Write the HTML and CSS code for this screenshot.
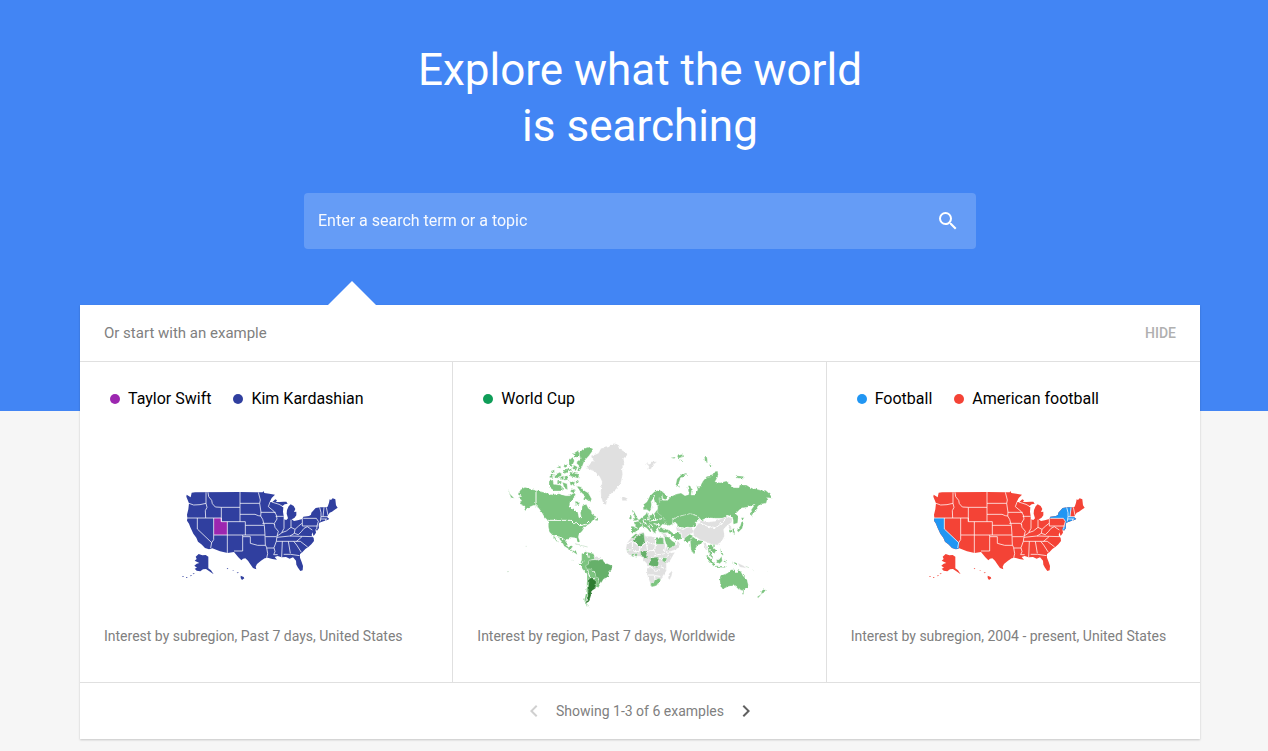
FILE: index.html
```html
<!DOCTYPE html>
<html lang="en">
  <head>
    <meta charset="utf-8">
    <meta name="viewport" content="width=device-width, initial-scale=1">
    <title>Explore what the world is searching</title>
    <link rel="stylesheet" href="styles.css">
  </head>

  <body>
    <!-- shared map shapes -->
    <svg class="defs" aria-hidden="true">
      <defs>
        <path id="us-land" d="M50 38 60 37 195 36 252 37 263 37 265 33 268 39 283 41 300 44 290 54 284 66 292 66 301 58 306 61 303 66 314 66 326 65 334 65 338 71 329 73 320 80 325 82 324 95 326 108 326 118 334 120 339 115 335 101 336 90 341 79 347 73 356 78 361 87 357 96 364 95 364 106 358 114 350 118 357 123 368 121 382 117 385 110 402 108 408 104 409 98 422 84 436 82 452 82 458 80 462 68 464 58 468 60 473 55 481 58 483 76 488 83 478 90 471 95 464 98 458 107 457 112 463 117 455 121 445 124 433 128 431 134 432 144 426 152 421 147 423 158 416 168 412 157 410 166 416 174 417 183 409 193 400 201 391 207 382 217 375 222 375 233 380 246 384 258 383 271 376 273 369 263 364 254 363 242 354 232 344 236 333 231 320 232 308 228 299 231 306 239 292 237 278 233 269 235 258 242 246 252 242 260 244 268 234 264 226 253 219 242 211 235 204 236 199 241 190 232 177 216 158 219 135 214 112 205 102 208 90 204 79 193 69 185 64 173 55 161 46 142 42 131 36 122 37 114 36 104 40 88 42 70 34 50 35 44 47 52Z
          M62 230 71 222 82 226 92 225 100 230 100 265 108 271 116 283 103 274 93 267 84 268 76 274 65 272 59 266 66 263 58 257 65 251 73 249 59 242 65 237Z
          M197 287 206 291 208 295 201 300 197 294ZM185 276 192 278 188 280ZM172 270 176 271 175 273ZM155 264 160 265 158 268Z
          M22 288h4v2h-4ZM33 291h4v2h-4ZM45 287l5-2v2l-4 2ZM53 281l5-2v2l-4 2Z"/>
        <path id="us-borders" d="M42 70 56 75 75 74 93 70M93 37V70L96 82 91 92 92 114M99 37 101 50 110 61 112 71 121 81 139 82M139 82V125M195 36V125M139 82H195M36 114H139M67 114V147L110 188 107 204M116 114V179L110 188M139 114V125M139 125H211M157 125V219M117 165H270M211 125V165M211 136H267M195 103H240L250 107 257 108M195 70H254M250 37 256 60 254 70 258 97 257 108 263 118 268 136 270 165 271 196M257 97H302M262 130H294L299 134M285 66 280 80 297 94 304 105 306 117 298 130 300 142 310 154 306 168 304 184 297 203 300 215 296 224H308M302 109H326M290 66 312 73 323 79M327 118V145L320 158 334 153 348 142 360 148 371 138 381 130M348 119V142M382 116V138M382 138H428M385 115H424M306 168 320 159M306 172 345 168 416 170M304 184H366M366 183 381 170M203 165V170H226V190L248 196 272 196M203 170V213H177M271 170H304M272 196 275 203 278 221 275 234M275 204H297M322 184 320 231M340 184 346 220M326 223H347L374 227M356 184 365 195 379 217M364 184 376 184 398 201M360 148 358 160 345 168M358 160 370 164 380 154 387 145 397 140 412 150M434 82 438 98V110L436 124M447 82 444 110M454 82 459 106M438 110H460M437 117H456M424 115 430 124 426 138 425 148M452 117V123"/>
        <clipPath id="us-clip"><use href="#us-land"/></clipPath>
        <filter id="coast" x="-5%" y="-5%" width="110%" height="110%">
          <feTurbulence type="fractalNoise" baseFrequency="0.12" numOctaves="2" seed="4"/>
          <feDisplacementMap in="SourceGraphic" scale="9" xChannelSelector="R" yChannelSelector="G"/>
        </filter>
      </defs>
    </svg>

    <header class="hero">
      <h1 class="title">Explore what the world<br>is searching</h1>
      <form class="search">
        <input class="search-input" type="text" aria-label="Search term" placeholder="Enter a search term or a topic">
        <button class="search-button" type="button" aria-label="Search">
          <svg class="icon" viewBox="0 0 24 24"><path d="M15.5 14h-.79l-.28-.27A6.47 6.47 0 0 0 16 9.5 6.5 6.5 0 1 0 9.5 16c1.61 0 3.09-.59 4.23-1.57l.27.28v.79l5 4.99L20.49 19l-4.99-5zm-6 0C7.01 14 5 11.99 5 9.5S7.01 5 9.5 5 14 7.01 14 9.5 11.99 14 9.5 14z"/></svg>
        </button>
      </form>
    </header>

    <main class="panel">
      <div class="panel-head">
        <span>Or start with an example</span>
        <button class="hide-button" type="button">HIDE</button>
      </div>

      <div class="cards">
        <section class="card">
          <ul class="legend">
            <li class="purple">Taylor Swift</li>
            <li class="indigo">Kim Kardashian</li>
          </ul>
          <div class="map">
            <svg class="us-map" viewBox="0 -63 546 378">
              <use class="fill-indigo" href="#us-land"/>
              <path class="fill-purple" d="M117 114H139V125H157V165H117Z"/>
              <use class="borders" href="#us-borders"/>
            </svg>
          </div>
          <p class="caption">Interest by subregion, Past 7 days, United States</p>
        </section>

        <section class="card">
          <ul class="legend">
            <li class="green">World Cup</li>
          </ul>
          <div class="map">
            <svg class="world-map" viewBox="0 0 840 525">
              <g class="countries" filter="url(#coast)">
                <!-- Greenland, Iceland, Svalbard -->
                <path class="none" d="M260 98 270 88 284 78 276 64 298 55 306 40 328 36 345 25 360 30 364 42 388 58 374 70 376 88 369 98 371 118 366 142 352 162 336 176 326 188 321 210 312 204 306 185 305 165 309 140 302 125 288 110ZM368 190 376 186 386 190 380 197 370 197ZM440 84 452 88 456 80 474 80 462 90 456 102 448 104 450 94Z"/>
                <!-- North America -->
                <path class="low" d="M58 188 68 184 57 176 66 163 78 157 94 162 110 166 135 172 160 179 180 176 200 182 212 182 224 174 230 182 214 200 211 216 224 224 236 230 240 248 247 248 244 234 250 212 262 208 268 220 276 226 280 238 292 246 282 256 272 266 258 274 250 288 240 298 238 306 243 320 237 322 232 309 214 307 204 314 202 328 208 337 216 332 222 332 216 344 232 350 236 360 224 352 196 334 188 320 176 306 166 302 180 328 170 316 160 300 152 292 148 276 148 258 136 246 128 232 118 218 104 211 92 216 76 226 78 214 62 206 68 196Z"/>
                <path class="low" d="M240 54 252 42 268 36 280 37 282 46 270 62 256 78 250 94 242 108 235 108 240 92 232 84 244 74ZM210 76 222 66 226 78 218 96 210 90ZM232 152 246 156 254 166 268 174 278 192 274 202 260 192 252 194 258 182 244 170ZM150 138 162 134 164 148 184 150 192 158 190 168 166 168 150 156ZM166 120 182 112 190 118 180 130 168 128ZM192 106 204 104 206 112 196 116ZM172 98 184 92 186 100ZM212 110 240 118 238 130 214 124ZM196 124 206 122 206 134 198 136ZM190 142 204 146 206 164 196 160ZM212 138 228 142 224 152 214 150ZM218 160 228 166 224 174 214 170ZM228 198 242 202 240 210 230 208ZM26 160 34 178 46 190 36 188ZM288 250 298 254 290 258Z"/>
                <path class="low" d="M222 56 238 46 242 60 228 70ZM224 90 236 96 230 108 220 100ZM152 120 164 116 162 128 152 128ZM196 88 206 90 202 98 194 96ZM184 126 194 122 194 134 184 134ZM206 98 218 102 214 108 206 106ZM176 138 188 138 186 148 174 146ZM156 108 166 104 166 112 158 114ZM232 134 240 138 236 146 230 142Z"/>
                <path class="line" d="M111 162V214M148 256H214L224 266 232 262 242 272 260 268 270 258M162 302 188 308 202 320M217 340 226 344"/>
                <!-- South America -->
                <path class="low" d="M248 356 260 350 284 356 288 372 272 376 266 394 276 402 288 414 296 430 302 442 304 448 298 458 290 452 282 430 270 428 270 452 266 480 260 500 268 512 258 506 256 494 262 470 264 440 264 416 250 402 242 388 248 374Z"/>
                <path class="none" d="M284 360 304 370 302 376 288 374Z"/>
                <path class="mid" d="M260 392 268 388 270 376 288 374 300 376 310 372 316 382 340 392 338 404 330 412 328 426 314 432 304 448 298 442 300 434 290 424 288 412 274 402 262 402Z"/>
                <path class="high" d="M270 430 280 428 292 440 290 460 278 468 276 482 268 504 260 504 266 484 268 456Z"/>
                <path class="line" d="M242 386 256 378M264 352 268 368M266 404 272 428M290 428 282 432"/>
                <!-- Europe -->
                <path class="low" d="M433 224 432 210 444 200 452 184 466 170 482 164 498 176 506 184 502 196 490 190 486 206 476 212 468 204 464 190 456 200 460 216 452 230 444 224ZM398 226 406 230 412 242 418 254 402 258 408 246ZM392 244 398 242 398 252 390 254ZM396 274 410 274 404 262 416 258 430 246 440 238 444 230 448 242 464 238 476 222 490 236 498 254 510 256 504 270 490 268 484 276 470 284 470 296 462 290 454 276 446 272 456 284 456 294 442 278 428 274 420 280 412 292 396 292ZM476 282 492 280 508 284 512 292 494 294 480 290Z"/>
                <path class="line" d="M404 274 416 280M418 258 432 272M430 246 434 262 444 268M450 242V254H436M466 238 470 256 450 258M470 256 488 250M464 266 484 270M452 264 462 276M456 222 466 180M486 166 490 190"/>
                <!-- Russia and Kazakhstan -->
                <path class="low" d="M476 234 476 215 482 202 480 188 492 196 506 196 514 186 530 178 546 174 558 182 570 178 566 158 572 146 578 164 576 180 588 180 596 164 592 150 600 160 612 138 624 124 640 122 644 110 656 108 658 122 648 140 664 143 682 138 696 150 704 158 720 158 722 150 742 150 756 158 772 162 786 166 800 166 812 176 820 190 806 188 802 204 786 208 778 216 766 232 758 246 754 228 768 208 748 216 726 220 710 236 718 244 716 264 704 268 700 246 684 240 674 250 650 250 624 248 608 256 594 242 574 236 548 242 524 250 520 268 510 272 498 262 494 248ZM530 150 534 132 548 118 562 114 564 118 544 132 538 148 544 158ZM616 66 624 66 626 84 618 80ZM628 88 640 92 638 98ZM710 122 732 124 738 130 716 130ZM514 68 528 66 530 72ZM534 62 550 58 552 66 538 70ZM536 74 550 74 548 78Z"/>
                <path class="low" d="M520 252 548 242 574 236 594 243 602 252 592 262 590 272 578 278 562 276 552 282 536 276 534 266 522 264Z"/>
                <!-- Asia -->
                <path class="none" d="M530 276 552 284 562 278 580 280 582 294 566 300 560 314 550 312 546 292 534 288ZM582 288 590 276 606 256 624 262 650 258 684 244 700 250 698 262 684 272 674 282 676 304 668 320 652 330 634 326 620 320 602 314 584 300ZM688 274 696 272 698 284 692 284ZM612 320 622 328 626 346 620 344ZM488 294 504 296 504 308 494 304ZM506 340 528 332 536 322 544 326 534 342 512 350Z"/>
                <path class="line" d="M604 264 626 274 650 278 670 264 680 252"/>
                <path class="low" d="M494 304 508 306 520 318 530 324 528 332 508 342 502 330ZM504 292 514 288 524 296 544 290 548 312 532 314 518 304ZM554 318 558 308 572 298 582 302 574 320 566 324ZM574 322 580 304 594 314 612 318 606 328 596 330 588 344 584 358 576 344ZM626 334 636 328 644 338 652 346 646 356 640 352 634 342 640 366 646 372 638 370 628 352ZM640 328 648 330 646 336ZM700 282 706 280 708 300 702 296ZM690 284 700 286 692 296ZM714 286 724 272 728 258 734 262 730 280 718 292ZM726 248 736 248 730 256Z"/>
                <path class="low" d="M620 360 630 366 648 388 644 394 630 378ZM650 392 680 394 678 398 652 396ZM652 374 660 374 668 364 670 378 662 386 654 382ZM676 374 684 376 680 390ZM664 340 670 350 674 362 666 356ZM700 380 714 384 714 392 704 388Z"/>
                <path class="none" d="M716 384 734 392 742 400 722 396Z"/>
                <!-- Africa -->
                <path class="none" d="M380 344 384 324 396 308 410 296 434 291 440 304 456 304 474 308 494 308 498 326 508 346 516 354 528 352 514 376 502 388 502 408 492 422 486 436 472 452 458 456 452 440 444 418 444 386 432 374 430 364 404 364 390 360ZM510 416 522 404 518 422 512 434 507 430Z"/>
                <path class="low" d="M396 308 410 296 416 298 402 312ZM471 307 492 308 495 328 471 328ZM490 368 504 368 500 384 490 378ZM454 446 464 440 478 430 486 434 472 452 458 456ZM380 342 390 342 388 350ZM398 356 406 356 404 366 398 364ZM410 354 416 354 414 364 410 364Z"/>
                <path class="mid" d="M400 318 418 300 434 293 438 322 424 336ZM424 348 446 348 442 362 448 372 440 368 426 364ZM456 368 478 366 480 380 476 398 466 396 450 390Z"/>
                <path class="line" d="M384 326 400 318 424 336 442 322 470 328V308M400 320V344L382 346M424 336 420 350 404 350M442 322 446 348 466 346 470 328M466 346 472 360 496 356 500 330M472 360 456 368M480 370H492M478 392 500 402M444 398 460 398 468 410 484 404M446 420 466 420 468 436M466 422 484 424M502 348 512 358 500 368"/>
                <!-- Oceania -->
                <path class="low" d="M662 432 664 422 686 414 696 404 708 404 712 414 718 402 726 410 732 422 744 434 748 450 736 468 720 464 708 452 690 454 672 462 664 454ZM728 472 736 472 732 480ZM794 460 800 466 792 476 786 472ZM788 476 778 490 774 486Z"/>
                <path class="faint" d="M228 326 250 332 266 336M218 376h3M80 334h3M24 410h4M262 510l10 6M804 412h3M740 394l10 4M760 404l4 6"/>
              </g>
            </svg>
          </div>
          <p class="caption">Interest by region, Past 7 days, Worldwide</p>
        </section>

        <section class="card">
          <ul class="legend">
            <li class="blue">Football</li>
            <li class="red">American football</li>
          </ul>
          <div class="map">
            <svg class="us-map" viewBox="0 -63 546 378">
              <use class="fill-red" href="#us-land"/>
              <path class="fill-blue" clip-path="url(#us-clip)" d="M30 114H67V147L112 188 110 210H80L30 130ZM380 115 384 104 404 100 422 80H450L444 110H470V130H436L432 146 426 156 420 146 428 138 430 124 424 115Z"/>
              <use class="borders" href="#us-borders"/>
            </svg>
          </div>
          <p class="caption">Interest by subregion, 2004 - present, United States</p>
        </section>
      </div>

      <nav class="pager" aria-label="Examples">
        <button class="pager-button" type="button" aria-label="Previous" disabled>
          <svg class="icon" viewBox="0 0 24 24"><path d="M15.41 7.41 14 6l-6 6 6 6 1.41-1.41L10.83 12z"/></svg>
        </button>
        <span>Showing 1-3 of 6 examples</span>
        <button class="pager-button" type="button" aria-label="Next">
          <svg class="icon" viewBox="0 0 24 24"><path d="M10 6 8.59 7.41 13.17 12l-4.58 4.59L10 18l6-6z"/></svg>
        </button>
      </nav>
    </main>
  </body>
</html>
```

FILE: styles.css
```css
* {
  box-sizing: border-box;
}

body {
  margin: 0;
  background: #f6f6f6;
  color: #808080;
  font-family: Roboto, sans-serif;
  font-size: 14px;
}

button {
  padding: 0;
  border: none;
  background: none;
  font-family: inherit;
  cursor: pointer;
}

.defs {
  position: absolute;
  width: 0;
  height: 0;
}

.icon {
  display: block;
  width: 24px;
  height: 24px;
  fill: currentColor;
}

/* Hero */
.hero {
  padding: 42px 68px 162px 80px;
  background: #4285f4;
  color: #fff;
}

.title {
  margin: 0 0 39px;
  font-size: 44px;
  font-weight: 400;
  line-height: 56px;
  text-align: center;
}

.search {
  display: flex;
  align-items: center;
  width: 60%;
  height: 56px;
  margin: 0 auto;
  padding: 0 16px 0 14px;
  border-radius: 4px;
  background: rgba(255, 255, 255, 0.19);
}

.search-input {
  flex: 1;
  min-width: 0;
  height: 100%;
  padding: 0 0 2px;
  border: none;
  outline: none;
  background: none;
  color: #fff;
  font-family: inherit;
  font-size: 16px;
}

.search-input::placeholder {
  color: #fff;
  opacity: 0.95;
}

.search-button {
  color: #fff;
}

/* Examples panel */
.panel {
  position: relative;
  margin: -106px 68px 12px 80px;
  background: #fff;
  box-shadow: 0 1px 2px rgba(0, 0, 0, 0.2);
}

.panel::before {
  content: '';
  position: absolute;
  top: -24px;
  left: 248px;
  border: 24px solid transparent;
  border-top: none;
  border-bottom-color: #fff;
}

.panel-head {
  display: flex;
  align-items: center;
  justify-content: space-between;
  height: 57px;
  padding: 0 24px;
  border-bottom: 1px solid #e0e0e0;
  font-size: 15px;
}

.hide-button {
  color: #b0b0b0;
  font-size: 14px;
  font-weight: 500;
}

.cards {
  display: grid;
  grid-template-columns: repeat(3, 1fr);
}

.card {
  min-width: 0;
  padding: 24px 24px 34px;
  border-right: 1px solid #e0e0e0;
}

.card:last-child {
  border-right: none;
}

.legend {
  display: flex;
  gap: 22px;
  margin: 0;
  padding: 0 0 0 6px;
  list-style: none;
  color: #000;
  font-size: 16px;
  line-height: 26px;
}

.legend li {
  display: flex;
  align-items: center;
  gap: 8px;
}

.legend li::before {
  content: '';
  width: 10px;
  height: 10px;
  border-radius: 50%;
  background: currentColor;
}

.legend .purple::before { background: #9c27b0; }
.legend .indigo::before { background: #303f9f; }
.legend .green::before { background: #0f9d58; }
.legend .blue::before { background: #2196f3; }
.legend .red::before { background: #f44336; }

.map {
  display: flex;
  align-items: center;
  justify-content: center;
  height: 212px;
  padding-top: 8px;
}

.us-map {
  width: 182px;
  height: 126px;
}

.world-map {
  width: 280px;
  height: 175px;
}

.fill-indigo { fill: #303f9f; }
.fill-purple { fill: #9c27b0; }
.fill-red { fill: #f44336; }
.fill-blue { fill: #2196f3; }

.borders {
  fill: none;
  stroke: rgba(255, 255, 255, 0.75);
  stroke-width: 3;
}

.countries path {
  stroke: #fff;
  stroke-width: 1;
}

.countries .none { fill: #e0e0e0; }
.countries .low { fill: #7cc47f; }
.countries .mid { fill: #66b06a; }
.countries .high { fill: #2e7d32; }

.countries .line {
  fill: none;
  stroke-width: 3;
}

.countries .faint {
  fill: none;
  stroke: #d5e8d6;
  stroke-width: 3;
}

.caption {
  margin: 0;
  line-height: 24px;
}

.pager {
  display: flex;
  align-items: center;
  justify-content: center;
  gap: 10px;
  height: 57px;
  border-top: 1px solid #e0e0e0;
}

.pager-button {
  color: #616161;
}

.pager-button:disabled {
  color: #d0d0d0;
  cursor: default;
}
```
